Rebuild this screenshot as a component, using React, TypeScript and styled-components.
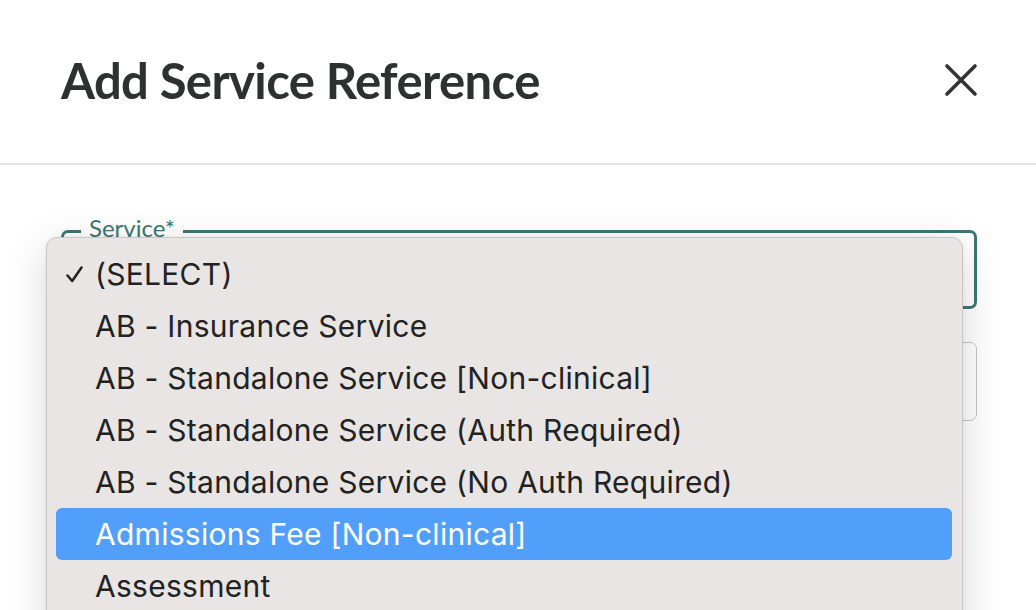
import React from "react";
import styled, { createGlobalStyle } from "styled-components";

const Global = createGlobalStyle`
  html, body { margin: 0; padding: 0; background: #fff; }
  body { width: 1036px; height: 610px; overflow: hidden; font-family: Lato, "Open Sans", sans-serif; }
`;

const Page = styled.div`
  position: relative;
  width: 1036px;
  height: 610px;
  overflow: hidden;
  background: #fff;
`;

const Header = styled.header`
  height: 165px;
  box-sizing: border-box;
  display: flex;
  align-items: center;
  justify-content: space-between;
  padding: 0 57px 0 61px;
  border-bottom: 2px solid #e3e3e3;
`;

const Title = styled.h1`
  margin: 0;
  margin-top: -4px;
  font-family: Lato, sans-serif;
  font-weight: 700;
  font-size: 49px;
  color: #2f3030;
  letter-spacing: -0.6px;
`;

const CloseButton = styled.button`
  border: 0;
  background: none;
  padding: 0;
  width: 36px;
  height: 36px;
  margin-top: -4px;
  display: flex;
  align-items: center;
  justify-content: center;
  cursor: pointer;
`;

const Body = styled.div`
  padding: 51px 59px 0 61px;
  display: flex;
  flex-direction: column;
  gap: 33px;
`;

const Field = styled.fieldset<{ $active?: boolean }>`
  margin: 0;
  height: ${(p) => (p.$active ? "93px" : "79px")};
  box-sizing: border-box;
  border: ${(p) => (p.$active ? "3px solid #3b7774" : "1.5px solid #c4c4c4")};
  border-radius: 7px;
  padding: 0 17px;
`;

const Legend = styled.legend`
  padding: 0 8px 6px;
  font-family: Lato, sans-serif;
  font-size: 24px;
  color: #3b7774;
  line-height: 24px;
`;

const Menu = styled.div`
  position: absolute;
  left: 46px;
  top: 237px;
  width: 917px;
  height: 420px;
  box-sizing: border-box;
  background: #e8e5e4;
  border: 1px solid #c9c7c6;
  border-radius: 11px;
  box-shadow: 0 10px 40px rgba(0, 0, 0, 0.16), 0 0 4px rgba(0, 0, 0, 0.06);
  padding: 10px 10px 0 9px;
  display: flex;
  flex-direction: column;
`;

const Option = styled.div<{ $highlight?: boolean }>`
  flex: 0 0 52px;
  height: 52px;
  display: flex;
  align-items: center;
  padding-left: 39px;
  position: relative;
  border-radius: 6px;
  font-family: Inter, "Noto Sans", sans-serif;
  font-size: 30px;
  letter-spacing: 0.27px;
  color: ${(p) => (p.$highlight ? "#fff" : "#222")};
  background: ${(p) => (p.$highlight ? "#519ffa" : "transparent")};
`;

const Check = styled.span`
  position: absolute;
  left: 10px;
  top: 18px;
  width: 17px;
  height: 17px;
  display: flex;
`;

const options = [
  "(SELECT)",
  "AB - Insurance Service",
  "AB - Standalone Service [Non-clinical]",
  "AB - Standalone Service (Auth Required)",
  "AB - Standalone Service (No Auth Required)",
  "Admissions Fee [Non-clinical]",
  "Assessment",
];

export default function App() {
  return (
    <Page>
      <Global />
      <Header>
        <Title>Add Service Reference</Title>
        <CloseButton aria-label="Close">
          <svg width="34" height="34" viewBox="0 0 34 34">
            <path d="M3 3 L31 31 M31 3 L3 31" stroke="#333" strokeWidth="3.6" strokeLinecap="round" />
          </svg>
        </CloseButton>
      </Header>
      <Body>
        <Field $active>
          <Legend>Service*</Legend>
        </Field>
        <Field />
      </Body>
      <Menu>
        {options.map((o, i) => (
          <Option key={o} $highlight={i === 5}>
            {i === 0 && (
              <Check>
                <svg width="17" height="17" viewBox="0 0 17 17">
                  <path d="M1.5 9.5 L6.2 15 L15.5 1.5" fill="none" stroke="#222" strokeWidth="2.5" strokeLinecap="round" strokeLinejoin="round" />
                </svg>
              </Check>
            )}
            {o}
          </Option>
        ))}
      </Menu>
    </Page>
  );
}
